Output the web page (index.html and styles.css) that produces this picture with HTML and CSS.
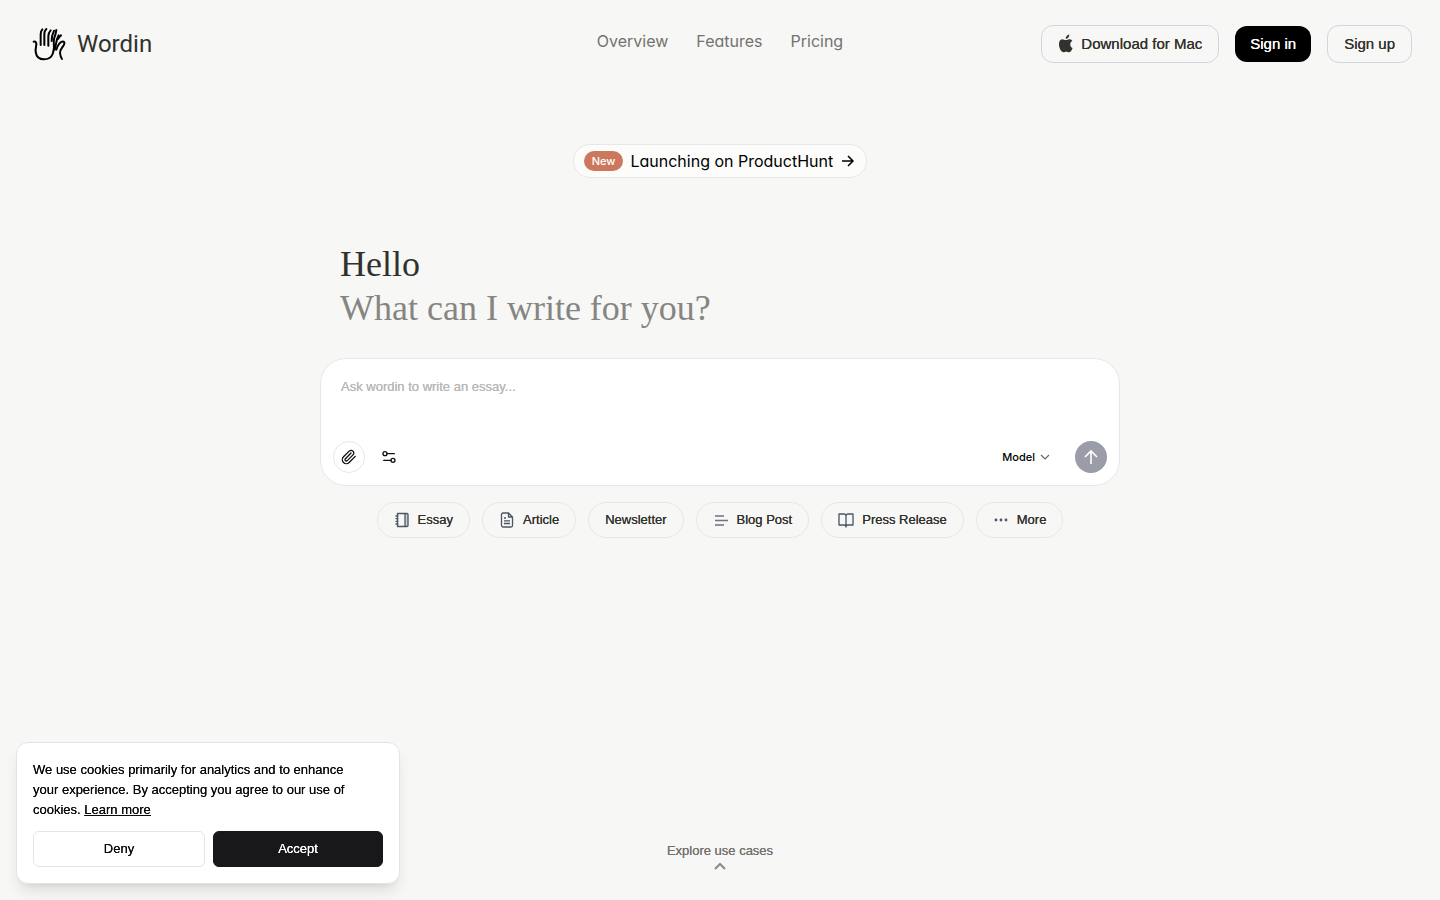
FILE: index.html
```html
<!DOCTYPE html>
<html lang="en">
<head>
<meta charset="utf-8">
<meta name="viewport" content="width=device-width, initial-scale=1">
<title>Wordin</title>
<link rel="stylesheet" href="styles.css">
</head>
<body>
<header class="header">
  <a class="brand" href="#">
    <svg class="brand-mark" viewBox="6 8 102 102" fill="none" stroke="#000" stroke-width="6" stroke-linecap="round" stroke-linejoin="round">
      <path d="M11 52c5-2 8 2 8 8-1 10-3 14-2 23 2 14 12 22 25 22 13 0 22-6 26-16 2-6 3-12 4-18"/>
      <path d="M32 62V30c0-7 1-11 5-15M43 62V28c0-7 2-10 6-14M55 64V36c0-8 2-13 7-18"/>
      <path d="M65 50c0-10 1-18 7-31M72 70c-1-14-2-26 2-33 2-4 3-9 5-20M74 76c5-14 3-28 12-43"/>
      <path d="M84 44c3-5 5-8 9-11M79 76c3-10 9-21 17-24 8-2 9 4 5 11-5 8-12 13-11 23 1 8 2 13 6 18"/>
    </svg>
    <span>Wordin</span>
  </a>
  <nav class="nav">
    <a href="#">Overview</a>
    <a href="#">Features</a>
    <a href="#">Pricing</a>
  </nav>
  <div class="actions">
    <button class="btn" type="button">
      <svg width="16" height="20" viewBox="0 0 16 20" fill="#32322d"><path d="M8 6C6.500 6 5.500 5.200 4.200 5.200 2 5.200 1 7.500 1 10.300c0 4 2.300 8 4.500 8 1 0 1.500-.6 2.700-.6s1.600.6 2.700.6c1.600 0 3-2.400 3.700-4.400-1.500-.6-2.300-1.900-2.300-3.500 0-1.500.8-2.800 2-3.600-1-1.200-2-1.600-3.100-1.600C9.900 5.200 9 6 8 6zM7.700 5c-.1-2.200 1.500-4.100 3.600-4.500C11.500 2.700 9.900 4.800 7.700 5z"/></svg>
      Download for Mac
    </button>
    <button class="btn btn-dark" type="button">Sign in</button>
    <button class="btn" type="button">Sign up</button>
  </div>
</header>

<main class="main">
  <a class="announce" href="#">
    <span class="tag">New</span>
    <span>Launching on ProductHunt</span>
    <svg width="16" height="16" viewBox="0 0 16 16" fill="none" stroke="#000" stroke-width="1.500"><path d="M2 8h11M8 3l5 5-5 5"/></svg>
  </a>

  <section class="writer">
    <h1 class="title">Hello<span class="subtitle">What can I write for you?</span></h1>
    <form class="composer">
      <textarea class="prompt" rows="2" aria-label="Prompt" placeholder="Ask wordin to write an essay..."></textarea>
      <div class="toolbar">
        <button class="round" type="button" aria-label="Attach file">
          <svg width="16" height="16" viewBox="0 0 24 24" fill="none" stroke="#111" stroke-width="2" stroke-linecap="round" stroke-linejoin="round"><path d="m21.440 11.050-9.190 9.190a6 6 0 0 1-8.490-8.490l8.570-8.570A4 4 0 1 1 18 8.840l-8.590 8.570a2 2 0 0 1-2.830-2.830l8.490-8.480"/></svg>
        </button>
        <button class="round plain" type="button" aria-label="Settings">
          <svg width="16" height="16" viewBox="0 0 24 24" fill="none" stroke="#111" stroke-width="2" stroke-linecap="round"><circle cx="6" cy="7" r="3"/><path d="M9 7h11M4 17h11"/><circle cx="18" cy="17" r="3"/></svg>
        </button>
        <button class="model" type="button">Model
          <svg width="12" height="12" viewBox="0 0 12 12" fill="none" stroke="#666" stroke-width="1.200"><path d="M2 4l4 4 4-4"/></svg>
        </button>
        <button class="send" type="submit" aria-label="Send">
          <svg width="20" height="20" viewBox="0 0 20 20" fill="none" stroke="#fff" stroke-width="1.600"><path d="M10 17V4M4 10l6-6 6 6"/></svg>
        </button>
      </div>
    </form>
    <div class="chips">
      <button class="chip" type="button"><svg class="icon" viewBox="0 0 16 16"><path d="M11 1.500h3v13h-3z" fill="#cdd0d4" stroke="none"/><path d="M3.500 1.500H13a1 1 0 0 1 1 1v11a1 1 0 0 1-1 1H3.500zM11 1.500v13M1.500 4h3M1.500 6.700h3M1.500 9.300h3M1.500 12h3"/></svg>Essay</button>
      <button class="chip" type="button"><svg class="icon" viewBox="0 0 16 16"><path d="M9.500 1H4a1.500 1.500 0 0 0-1.500 1.500v11A1.500 1.500 0 0 0 4 15h8a1.500 1.500 0 0 0 1.500-1.500V5zM9.500 1v4h4M5 6h2M5 8.800h6M5 11.500h6"/></svg>Article</button>
      <button class="chip" type="button">Newsletter</button>
      <button class="chip" type="button"><svg class="icon lines" viewBox="0 0 16 16"><path d="M2 4h9M2 8.500h13M2 13h9"/></svg>Blog Post</button>
      <button class="chip" type="button"><svg class="icon" viewBox="0 0 16 16"><path d="M8 4a2 2 0 0 0-2-2H1v11h5a2 2 0 0 1 2 2 2 2 0 0 1 2-2h5V2h-5a2 2 0 0 0-2 2v11"/></svg>Press Release</button>
      <button class="chip" type="button"><svg class="icon dots" viewBox="0 0 16 16"><circle cx="3" cy="8" r="1.400"/><circle cx="8" cy="8" r="1.400"/><circle cx="13" cy="8" r="1.400"/></svg>More</button>
    </div>
  </section>

  <button class="explore" type="button">Explore use cases
    <svg width="12" height="10" viewBox="0 0 12 10" fill="none" stroke="#8b8b88" stroke-width="2"><path d="M1 8l5-5 5 5"/></svg>
  </button>
</main>

<aside class="cookies" aria-label="Cookie notice">
  <p class="cookies-text">We use cookies primarily for analytics and to enhance your experience. By accepting you agree to our use of cookies. <a href="#">Learn more</a></p>
  <div class="cookies-actions">
    <button class="choice" type="button">Deny</button>
    <button class="choice accept" type="button">Accept</button>
  </div>
</aside>
</body>
</html>
```
FILE: styles.css
```css
* { box-sizing: border-box; }
body {
  margin: 0;
  min-height: 100vh;
  display: flex;
  flex-direction: column;
  background: #f7f7f5;
  color: #32322d;
  font: 500 13px/20px "Liberation Sans", Arial, sans-serif;
}
button, textarea { font: inherit; color: inherit; margin: 0; }
button { cursor: pointer; }
a { color: inherit; text-decoration: none; }
svg { flex: none; }

/* Doubles the glyph edges for a medium weight */
.btn, .chip, .prompt, .cookies, .choice, .explore { text-shadow: 0 0 0 currentColor; }

.header {
  display: grid;
  grid-template-columns: 1fr auto 1fr;
  align-items: center;
  height: 88px;
  padding: 0 28px;
}
.brand {
  display: flex;
  align-items: center;
  gap: 11px;
  padding-left: 4px;
  font: 400 24px/32px Roboto, sans-serif;
}
.brand-mark { width: 34px; height: 34px; }
.nav {
  display: flex;
  gap: 28px;
  padding-bottom: 6px;
  color: #73736f;
  font-family: Inter, sans-serif;
  font-size: 16px;
  font-weight: 400;
  font-feature-settings: "cv11";
}
.actions { display: flex; align-items: center; justify-content: flex-end; gap: 16px; }
.btn {
  display: flex;
  align-items: center;
  gap: 7px;
  height: 38px;
  padding: 0 16px;
  border: 1px solid #d3d4e0;
  border-radius: 12px;
  background: transparent;
  font-size: 15px;
}
.btn-dark { height: 36px; padding: 0 15px; border: 0; background: #000; color: #fff; }

.main { flex: 1; display: flex; flex-direction: column; align-items: center; padding: 56px 20px 29px; }
.announce {
  display: flex;
  align-items: center;
  gap: 7px;
  height: 34px;
  padding: 0 10px;
  border: 1px solid #e5e7eb;
  border-radius: 17px;
  background: #fcfcfb;
  color: #000;
  font-family: Inter, sans-serif;
  font-size: 16px;
  font-weight: 400;
  font-feature-settings: "cv11";
}
.tag { padding: 0 8px; border-radius: 10px; background: #cc785c; color: #fff; font-size: 11px; font-weight: 500; }
.writer { width: 100%; max-width: 800px; margin-top: 64px; }
.title { margin: 0 20px; font: 400 36px/44px "Liberation Serif", serif; }
.subtitle { display: block; color: #858582; }
.composer {
  margin-top: 28px;
  padding: 18px 12px 12px;
  border: 1px solid #e5e7eb;
  border-radius: 26px;
  background: #fff;
}
.prompt {
  display: block;
  width: 100%;
  height: 64px;
  padding: 0 8px;
  border: 0;
  outline: 0;
  resize: none;
  background: transparent;
}
.prompt::placeholder { color: #b8b8b5; opacity: 1; }
.toolbar { display: flex; align-items: center; gap: 8px; }
.round, .send {
  display: flex;
  align-items: center;
  justify-content: center;
  width: 32px;
  height: 32px;
  padding: 0;
  border: 1px solid #e5e7eb;
  border-radius: 50%;
  background: transparent;
}
.plain { border-color: transparent; }
.model {
  display: flex;
  align-items: center;
  gap: 4px;
  margin-left: auto;
  margin-right: 16px;
  padding: 0;
  border: 0;
  background: transparent;
  color: #000;
  font-family: Inter, sans-serif;
  font-size: 11px;
}
.send { border: 0; background: #9a9da7; }
.chips { display: flex; flex-wrap: wrap; justify-content: center; gap: 12px; margin-top: 16px; }
.chip {
  display: flex;
  align-items: center;
  gap: 8px;
  height: 36px;
  padding: 0 16px;
  border: 1px solid #e7e7e5;
  border-radius: 18px;
  background: transparent;
}
.icon { width: 16px; height: 16px; fill: none; stroke: #4b5563; stroke-width: 1.3; stroke-linejoin: round; }
.lines { stroke: #6b7280; stroke-width: 1.6; }
.dots { fill: #4b5563; stroke: none; }
.explore {
  display: flex;
  flex-direction: column;
  align-items: center;
  margin-top: auto;
  padding: 0;
  border: 0;
  background: transparent;
  color: #73736f;
}

.cookies {
  position: fixed;
  left: 16px;
  bottom: 16px;
  width: 384px;
  padding: 17px 16px 16px;
  border: 1px solid #e4e4e7;
  border-radius: 12px;
  background: #fff;
  color: #09090b;
  box-shadow: 0 10px 15px -3px rgba(0, 0, 0, .1), 0 4px 6px -4px rgba(0, 0, 0, .1);
}
.cookies-text { margin: 0 0 11px; padding-right: 20px; }
.cookies-text a { text-decoration: underline; text-underline-offset: 1px; }
.cookies-actions { display: grid; grid-template-columns: 172fr 170fr; gap: 8px; }
.choice {
  height: 36px;
  padding: 0;
  border: 1px solid #e4e4e7;
  border-radius: 6px;
  background: #fff;
}
.accept { border-color: #18181b; background: #18181b; color: #fff; }
```
